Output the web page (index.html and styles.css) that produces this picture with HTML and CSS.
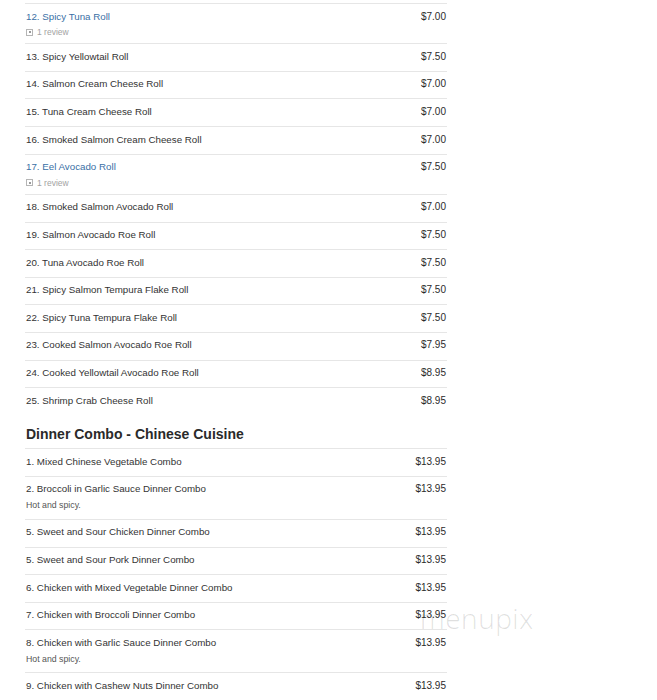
FILE: index.html
```html
<!DOCTYPE html>
<html lang="en">

<head>
  <meta charset="UTF-8">
  <meta name="viewport" content="width=device-width, initial-scale=1.0">
  <title>Menu</title>
  <link rel="stylesheet" href="styles.css">
</head>

<body>
  <div class="menu">
    <ul class="item-list">
      <li class="item">
        <div class="item-info">
          <a href="#" class="item-name link">12. Spicy Tuna Roll</a>
          <div class="review"><span class="review-icon"></span>1 review</div>
        </div>
        <span class="price">$7.00</span>
      </li>
      <li class="item">
        <div class="item-info"><span class="item-name">13. Spicy Yellowtail Roll</span></div>
        <span class="price">$7.50</span>
      </li>
      <li class="item">
        <div class="item-info"><span class="item-name">14. Salmon Cream Cheese Roll</span></div>
        <span class="price">$7.00</span>
      </li>
      <li class="item">
        <div class="item-info"><span class="item-name">15. Tuna Cream Cheese Roll</span></div>
        <span class="price">$7.00</span>
      </li>
      <li class="item">
        <div class="item-info"><span class="item-name">16. Smoked Salmon Cream Cheese Roll</span></div>
        <span class="price">$7.00</span>
      </li>
      <li class="item">
        <div class="item-info">
          <a href="#" class="item-name link">17. Eel Avocado Roll</a>
          <div class="review"><span class="review-icon"></span>1 review</div>
        </div>
        <span class="price">$7.50</span>
      </li>
      <li class="item">
        <div class="item-info"><span class="item-name">18. Smoked Salmon Avocado Roll</span></div>
        <span class="price">$7.00</span>
      </li>
      <li class="item">
        <div class="item-info"><span class="item-name">19. Salmon Avocado Roe Roll</span></div>
        <span class="price">$7.50</span>
      </li>
      <li class="item">
        <div class="item-info"><span class="item-name">20. Tuna Avocado Roe Roll</span></div>
        <span class="price">$7.50</span>
      </li>
      <li class="item">
        <div class="item-info"><span class="item-name">21. Spicy Salmon Tempura Flake Roll</span></div>
        <span class="price">$7.50</span>
      </li>
      <li class="item">
        <div class="item-info"><span class="item-name">22. Spicy Tuna Tempura Flake Roll</span></div>
        <span class="price">$7.50</span>
      </li>
      <li class="item">
        <div class="item-info"><span class="item-name">23. Cooked Salmon Avocado Roe Roll</span></div>
        <span class="price">$7.95</span>
      </li>
      <li class="item">
        <div class="item-info"><span class="item-name">24. Cooked Yellowtail Avocado Roe Roll</span></div>
        <span class="price">$8.95</span>
      </li>
      <li class="item">
        <div class="item-info"><span class="item-name">25. Shrimp Crab Cheese Roll</span></div>
        <span class="price">$8.95</span>
      </li>
    </ul>

    <h2 class="section-title">Dinner Combo - Chinese Cuisine</h2>
    <ul class="item-list">
      <li class="item">
        <div class="item-info"><span class="item-name">1. Mixed Chinese Vegetable Combo</span></div>
        <span class="price">$13.95</span>
      </li>
      <li class="item">
        <div class="item-info">
          <span class="item-name">2. Broccoli in Garlic Sauce Dinner Combo</span>
          <div class="item-desc">Hot and spicy.</div>
        </div>
        <span class="price">$13.95</span>
      </li>
      <li class="item">
        <div class="item-info"><span class="item-name">5. Sweet and Sour Chicken Dinner Combo</span></div>
        <span class="price">$13.95</span>
      </li>
      <li class="item">
        <div class="item-info"><span class="item-name">5. Sweet and Sour Pork Dinner Combo</span></div>
        <span class="price">$13.95</span>
      </li>
      <li class="item">
        <div class="item-info"><span class="item-name">6. Chicken with Mixed Vegetable Dinner Combo</span></div>
        <span class="price">$13.95</span>
      </li>
      <li class="item">
        <div class="item-info"><span class="item-name">7. Chicken with Broccoli Dinner Combo</span></div>
        <span class="price">$13.95</span>
      </li>
      <li class="item">
        <div class="item-info">
          <span class="item-name">8. Chicken with Garlic Sauce Dinner Combo</span>
          <div class="item-desc">Hot and spicy.</div>
        </div>
        <span class="price">$13.95</span>
      </li>
      <li class="item">
        <div class="item-info"><span class="item-name">9. Chicken with Cashew Nuts Dinner Combo</span></div>
        <span class="price">$13.95</span>
      </li>
    </ul>
  </div>

  <span class="watermark">menupix</span>
</body>

</html>
```

FILE: styles.css
```css
body {
  margin: 0;
  padding: 0;
  background-color: #FFFFFF;
  color: #333333;
  font-family: "Liberation Sans", Arial, sans-serif;
}

.menu {
  width: 422px;
  padding: 3px 0 0 25px;
}

.item-list {
  list-style: none;
  margin: 0;
  padding: 0;
}

.item {
  display: flex;
  justify-content: space-between;
  align-items: flex-start;
  border-top: 1px solid #E6E6E6;
  padding: 5.5px 1px 7.1px 1px;
  font-size: 9.75px;
  line-height: 14px;
}

.item-name {
  color: #333333;
  text-decoration: none;
}

.link {
  color: #3A6FA5;
}

.price {
  font-size: 10px;
  color: #2B2B2B;
}

/* review line sits a bit lower than a plain row would allow */
.review {
  display: flex;
  align-items: center;
  height: 15px;
  margin: 1px 0 -3.3px 0;
  font-size: 8.5px;
  color: #A3A3A3;
}

.review-icon {
  width: 5px;
  height: 5px;
  border: 1px solid #B5B5B5;
  margin-right: 4px;
  position: relative;
}

.review-icon::after {
  content: "";
  position: absolute;
  left: 1.5px;
  top: 1.5px;
  width: 2px;
  height: 2px;
  background-color: #9A9A9A;
}

.item-desc {
  margin: 2px 0 -0.6px 0;
  font-size: 8.75px;
  line-height: 14px;
  color: #555555;
}

.section-title {
  margin: 11.6px 0 5px 1px;
  font-size: 14px;
  line-height: 17px;
  color: #2A2A2A;
}

.watermark {
  position: absolute;
  left: 420px;
  top: 599px;
  font-family: "Open Sans", sans-serif;
  font-weight: 300;
  font-size: 28px;
  color: rgba(0, 0, 0, 0.13);
  letter-spacing: 0.5px;
}
```
